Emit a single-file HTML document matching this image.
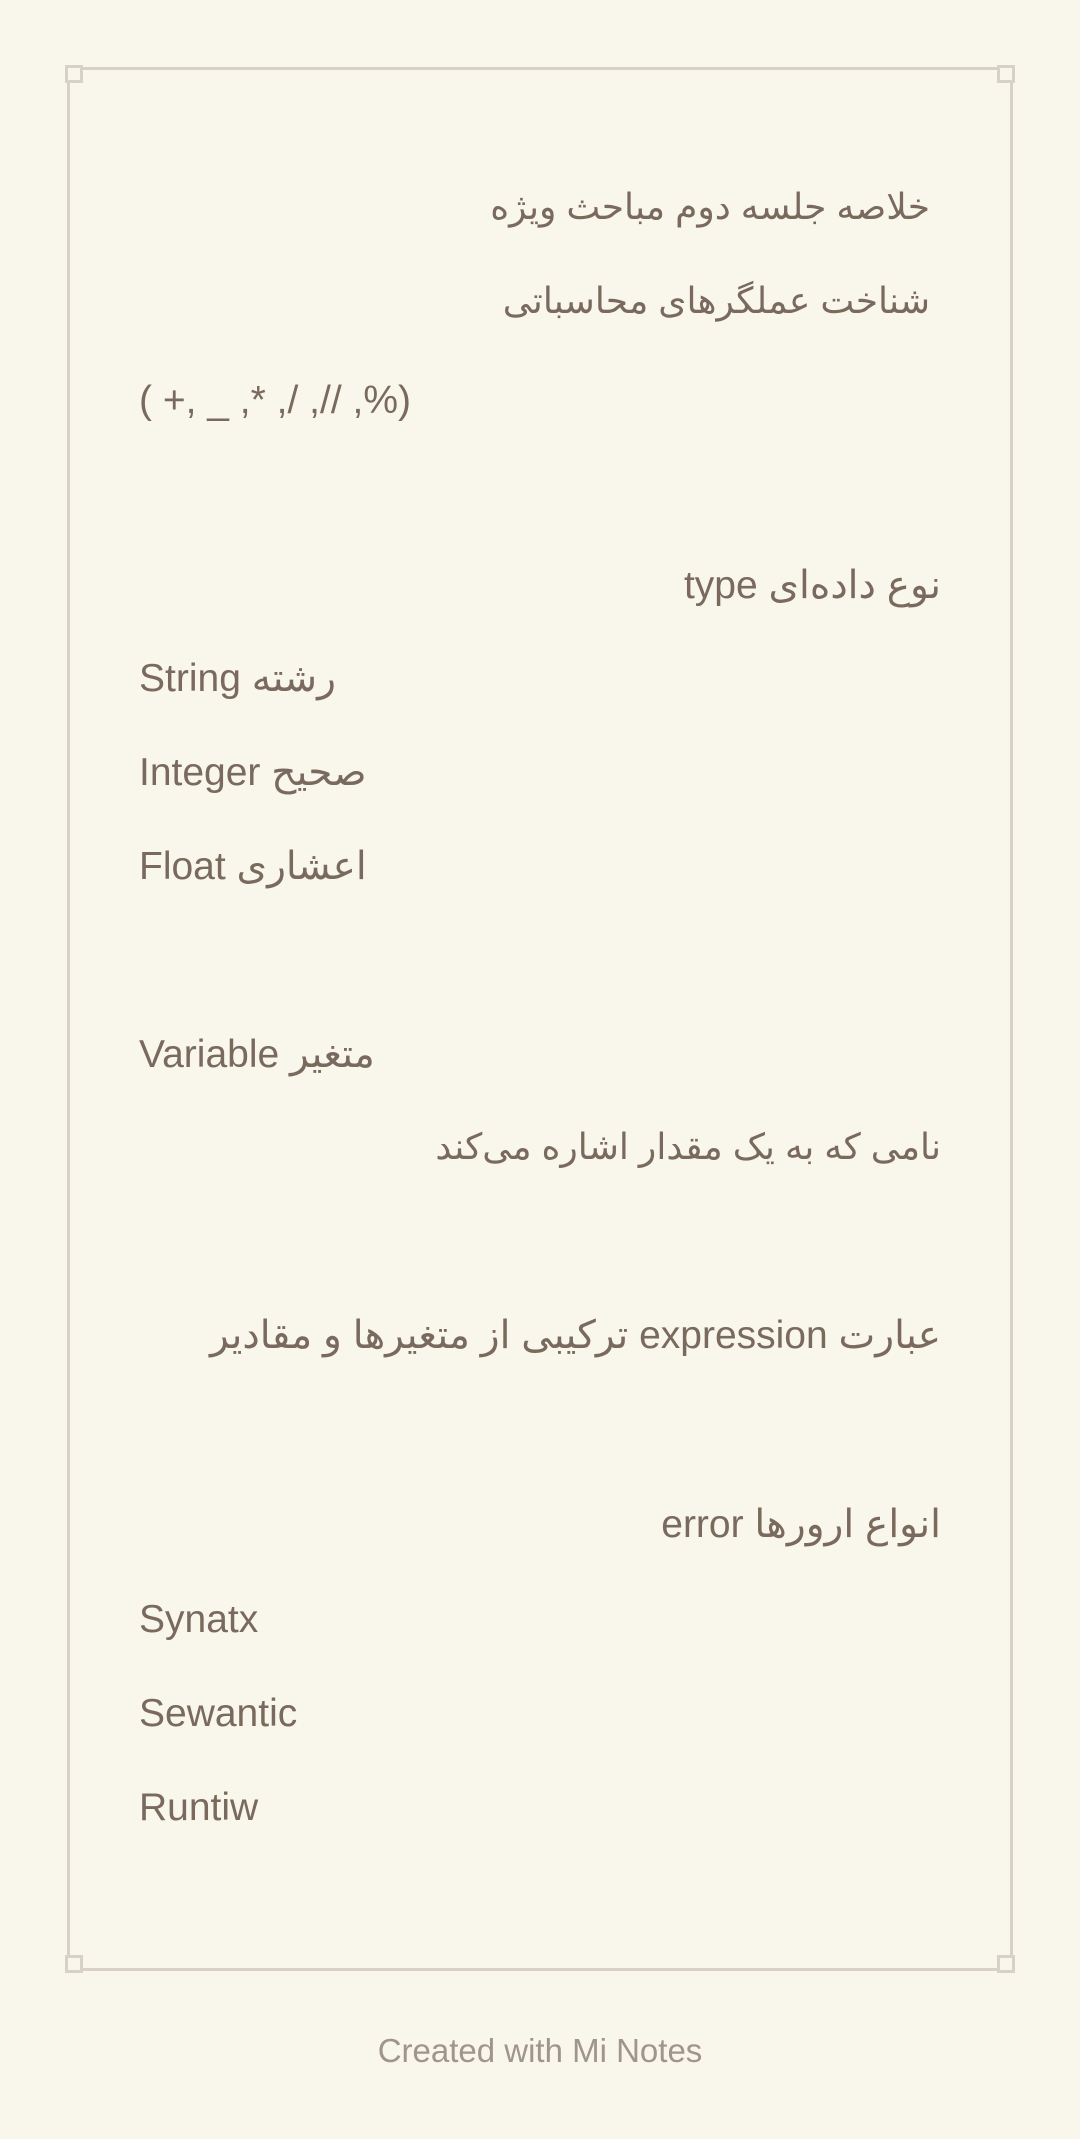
<!DOCTYPE html>
<html><head><meta charset="utf-8"><style>
html,body{margin:0;padding:0}
body{width:1080px;height:2139px;background:#f9f6ec;position:relative;overflow:hidden;font-family:"Liberation Sans","DejaVu Sans",sans-serif;color:#7a6a5e}
.frame{position:absolute;left:67px;top:67px;width:946px;height:1904px;border:3px solid #d8d1c6;box-sizing:border-box}
.c{position:absolute;width:18px;height:18px;border:3px solid #d8d1c6;background:#f9f6ec;box-sizing:border-box}
.l{position:absolute;font-size:39px;line-height:50px;white-space:nowrap}
.r{right:139px;direction:rtl}
.lt{left:139px}
.ar{font-size:36px}
.foot{position:absolute;left:0;width:1080px;text-align:center;top:2032px;font-size:33px;color:#a0958b}
</style></head><body>
<div class="frame"></div>
<div class="c" style="left:65px;top:65px"></div>
<div class="c" style="left:997px;top:65px"></div>
<div class="c" style="left:65px;top:1955px"></div>
<div class="c" style="left:997px;top:1955px"></div>

<div class="l r ar" style="right:150px;top:182px">خلاصه جلسه دوم مباحث ویژه</div>
<div class="l r ar" style="right:150px;top:276px">شناخت عملگرهای محاسباتی</div>
<div class="l lt" style="top:376px">( +, _ ,* ,/ ,// ,%)</div>
<div class="l r" style="top:561px">نوع داده‌ای type</div>
<div class="l lt" style="top:654px">String رشته</div>
<div class="l lt" style="top:748px">Integer صحیح</div>
<div class="l lt" style="top:842px">Float اعشاری</div>
<div class="l lt" style="top:1030px">Variable متغیر</div>
<div class="l r ar" style="top:1122px">نامی که به یک مقدار اشاره می‌کند</div>
<div class="l r" style="top:1311px">عبارت expression ترکیبی از متغیرها و مقادیر</div>
<div class="l r" style="top:1500px">انواع ارورها error</div>
<div class="l lt" style="top:1595px">Synatx</div>
<div class="l lt" style="top:1689px">Sewantic</div>
<div class="l lt" style="top:1783px">Runtiw</div>
<div class="foot">Created with Mi Notes</div>
</body></html>
